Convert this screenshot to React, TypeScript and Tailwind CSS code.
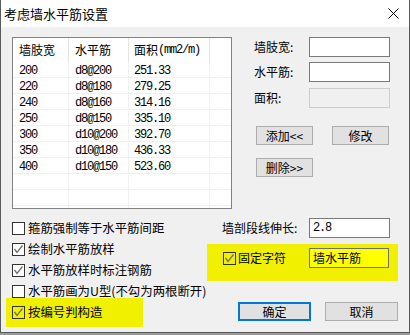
import React from "react";

const cjk = { fontFamily: '"Noto Sans CJK SC", "Noto Sans", sans-serif' };
const mono = { fontFamily: '"Liberation Mono", "Noto Sans CJK SC", monospace' };

const rows = [
  ["200", "d8@200", "251.33"],
  ["220", "d8@180", "279.25"],
  ["240", "d8@160", "314.16"],
  ["250", "d8@150", "335.10"],
  ["300", "d10@200", "392.70"],
  ["350", "d10@180", "436.33"],
  ["400", "d10@150", "523.60"],
  ["", "", ""],
  ["", "", ""],
  ["", "", ""],
];

function Check({ checked, clear }: { checked?: boolean; clear?: boolean }) {
  return (
    <span
      className={`w-[13px] h-[13px] border border-[#333333] flex items-center justify-center shrink-0 ${
        clear ? "bg-transparent" : "bg-white"
      }`}
    >
      {checked && (
        <svg width="11" height="11" viewBox="0 0 11 11">
          <path d="M1.5 5 L4 8.5 L9.5 1.5" stroke="#707070" strokeWidth="1.3" fill="none" />
        </svg>
      )}
    </span>
  );
}

function Btn({ children, primary, w }: { children: React.ReactNode; primary?: boolean; w: string }) {
  return (
    <div
      className={`${w} h-[19px] flex items-center justify-center bg-[#e1e1e1] text-[12px] text-black ${
        primary ? "border-2 border-[#0078d7]" : "border border-[#adadad]"
      }`}
    >
      {children}
    </div>
  );
}

function Field({ label, disabled }: { label: string; disabled?: boolean }) {
  return (
    <div className="flex items-center h-[20px]">
      <span className="w-[55px] text-[12px] text-black">{label}</span>
      <div
        className={`w-[81px] h-[20px] ${
          disabled ? "border border-[#cccccc] bg-[#f0f0f0]" : "border border-[#7a7a7a] bg-white"
        }`}
      />
    </div>
  );
}

function CheckRow({ text, checked }: { text: string; checked?: boolean }) {
  return (
    <div className="flex items-center gap-[3px] h-[13px] mt-[8px]">
      <Check checked={checked} />
      <span className="text-[12.4px] leading-[13px] text-black whitespace-nowrap">{text}</span>
    </div>
  );
}

export default function App() {
  return (
    <div className="w-[410px] h-[335px] bg-[#9a9a9a]" style={cjk}>
      <div className="w-[410px] h-[333px] flex flex-col border-x border-b border-[#5a5a5a] bg-[#f0f0f0]">
        {/* title bar */}
        <div className="h-[27px] bg-white flex items-center justify-between pl-[3px] pr-[10px] shrink-0">
          <span className="text-[13px] text-black">考虑墙水平筋设置</span>
          <svg width="11" height="11" viewBox="0 0 11 11">
            <path d="M0.5 0.5 L10.5 10.5 M10.5 0.5 L0.5 10.5" stroke="#000" strokeWidth="1" />
          </svg>
        </div>

        {/* top section */}
        <div className="flex pt-[10px] pl-[11px]">
          <div className="w-[220px] h-[172px] border border-[#828282] bg-white overflow-hidden">
            <div className="grid grid-cols-[56px_60px_81px_1fr] h-[24px] text-[12px] text-black">
              <div className="pl-[6px] flex items-center border-r border-[#e5e5e5]">墙肢宽</div>
              <div className="pl-[6px] flex items-center border-r border-[#e5e5e5]">水平筋</div>
              <div className="pl-[5px] flex items-center border-r border-[#e5e5e5]">
                面积<span style={mono} className="text-[12px] tracking-[-1.2px]">(mm2/m)</span>
              </div>
              <div />
            </div>
            {rows.map((r, i) => (
              <div
                key={i}
                className="grid grid-cols-[56px_60px_81px_1fr] h-[16px] border-b border-[#f0f0f0] text-[12px] text-black"
                style={mono}
              >
                <div className="pl-[6px] flex items-center border-r border-[#f0f0f0] tracking-[-1.2px]">{r[0]}</div>
                <div className="pl-[6px] flex items-center border-r border-[#f0f0f0] tracking-[-1.2px]">{r[1]}</div>
                <div className="pl-[5px] flex items-center border-r border-[#f0f0f0] tracking-[-1.2px]">{r[2]}</div>
                <div />
              </div>
            ))}
          </div>

          <div className="flex flex-col pl-[22px]">
            <Field label="墙肢宽:" />
            <div className="mt-[5px]">
              <Field label="水平筋:" />
            </div>
            <div className="mt-[6px]">
              <Field label="面积:" disabled />
            </div>
            <div className="flex gap-[19px] mt-[18px] pl-[2px]">
              <Btn w="w-[57px]">添加&lt;&lt;</Btn>
              <Btn w="w-[57px]">修改</Btn>
            </div>
            <div className="flex mt-[13px] pl-[2px]">
              <Btn w="w-[57px]">删除&gt;&gt;</Btn>
            </div>
          </div>
        </div>

        {/* bottom section */}
        <div className="flex">
          <div className="w-[206px] flex flex-col pl-[11px] pt-[5px]">
            <CheckRow text="箍筋强制等于水平筋间距" />
            <CheckRow text="绘制水平筋放样" checked />
            <CheckRow text="水平筋放样时标注钢筋" checked />
            <CheckRow text="水平筋画为U型(不勾为两根断开)" />
            <div className="-ml-[6px] pl-[6px] w-[137px] h-[29px] bg-[#f0f000] flex items-center gap-[3px] mt-[0px]">
              <Check checked clear />
              <span className="text-[12.4px] leading-[13px] text-black">按编号判构造</span>
            </div>
          </div>

          <div className="flex flex-col">
            <div className="flex items-center h-[20px] mt-[9px] pl-[15px]">
              <span className="w-[87px] text-[12px] text-black">墙剖段线伸长:</span>
              <div className="w-[81px] h-[20px] border border-[#7a7a7a] bg-white flex items-center pl-[3px]">
                <span style={mono} className="text-[12px] text-black tracking-[-1.2px]">2.8</span>
              </div>
            </div>
            <div className="w-[191px] h-[37px] bg-[#f0f000] mt-[6px] pt-[4px] pl-[16px]">
              <div className="flex items-center h-[20px]">
                <Check checked clear />
                <span className="w-[73px] pl-[2px] text-[12px] text-black">固定字符</span>
                <div className="w-[80px] h-[20px] border border-[#707070] bg-[#ffff00] flex items-center pl-[3px]">
                  <span className="text-[12px] text-black">墙水平筋</span>
                </div>
              </div>
            </div>
            <div className="flex gap-[14px] mt-[21px] pl-[31px]">
              <Btn w="w-[73px]" primary>确定</Btn>
              <Btn w="w-[73px]">取消</Btn>
            </div>
          </div>
        </div>
      </div>
    </div>
  );
}
